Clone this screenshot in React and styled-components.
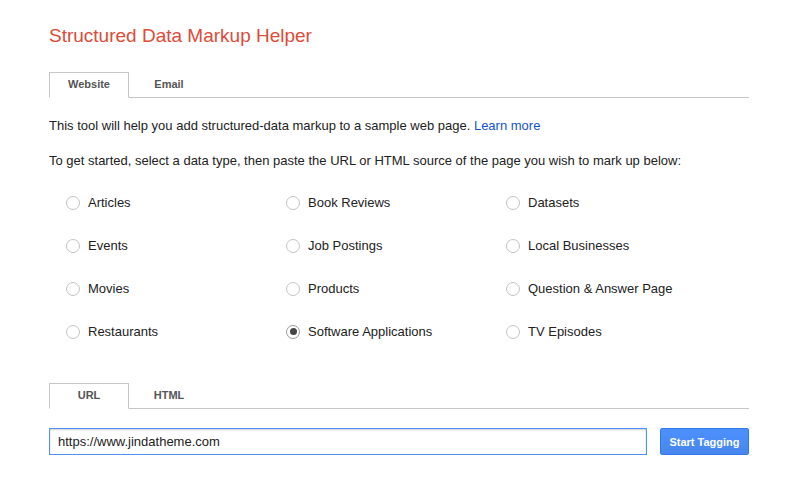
import React, { useState } from "react";
import styled, { createGlobalStyle } from "styled-components";

const Global = createGlobalStyle`
  html, body { margin: 0; padding: 0; background: #fff; }
  body { font-family: Arial, "Liberation Sans", Helvetica, sans-serif; color: #222; }
  * { box-sizing: border-box; }
`;

const Page = styled.div`
  width: 700px;
  margin-left: 49px;
  padding-top: 24px;
`;

const Title = styled.h1`
  margin: 0;
  font-size: 19px;
  font-weight: normal;
  color: #dd4b39;
  line-height: 24px;
  height: 24px;
`;

const Tabs = styled.div`
  display: flex;
  border-bottom: 1px solid #c6c6c6;
  margin-top: ${(p) => p.$top}px;
  height: 26px;
`;

const Tab = styled.div`
  width: 80px;
  height: 26px;
  display: flex;
  align-items: center;
  justify-content: center;
  padding-bottom: 3px;
  font-size: 11px;
  font-weight: bold;
  color: #555;
  border: 1px solid ${(p) => (p.$active ? "#c6c6c6" : "transparent")};
  border-bottom: ${(p) => (p.$active ? "1px solid #fff" : "none")};
  background: ${(p) => (p.$active ? "#fff" : "transparent")};
  cursor: default;
`;

const Para = styled.p`
  margin: ${(p) => p.$top}px 0 0 0;
  font-size: 13px;
  line-height: 16px;
  color: #222;
`;

const Link = styled.a`
  color: #1155cc;
  text-decoration: none;
`;

const Grid = styled.div`
  display: grid;
  grid-template-columns: repeat(3, 220px);
  grid-auto-rows: 43px;
  margin-top: 12px;
  margin-left: 17px;
`;

const Option = styled.label`
  display: flex;
  align-items: center;
  gap: 8px;
  font-size: 13px;
  color: #222;
  height: 43px;
  cursor: pointer;
`;

const Radio = styled.span`
  width: 14px;
  height: 14px;
  border-radius: 50%;
  border: 1px solid ${(p) => (p.$checked ? "#9a9a9a" : "#c4c4c4")};
  background: #fff;
  display: flex;
  align-items: center;
  justify-content: center;
  flex: none;
  &::after {
    content: "";
    width: 7px;
    height: 7px;
    border-radius: 50%;
    background: ${(p) => (p.$checked ? "#444" : "transparent")};
  }
`;

const InputRow = styled.div`
  display: flex;
  align-items: center;
  gap: 13px;
  margin-top: 19px;
`;

const UrlInput = styled.input`
  width: 598px;
  height: 27px;
  border: 1px solid #4d90fe;
  box-shadow: inset 0 1px 2px rgba(0, 0, 0, 0.2);
  padding: 0 8px;
  font-size: 13px;
  font-family: Arial, "Liberation Sans", sans-serif;
  color: #222;
  outline: none;
`;

const Button = styled.button`
  width: 89px;
  height: 27px;
  border: 1px solid #3079ed;
  border-radius: 2px;
  background: linear-gradient(#4d90fe, #4787ed);
  color: #fff;
  font-size: 11px;
  font-weight: bold;
  font-family: Arial, "Liberation Sans", sans-serif;
  padding: 0;
`;

const types = [
  "Articles", "Book Reviews", "Datasets",
  "Events", "Job Postings", "Local Businesses",
  "Movies", "Products", "Question & Answer Page",
  "Restaurants", "Software Applications", "TV Episodes",
];

export default function App() {
  const [sel, setSel] = useState("Software Applications");
  return (
    <>
      <Global />
      <Page>
        <Title>Structured Data Markup Helper</Title>
        <Tabs $top={24}>
          <Tab $active>Website</Tab>
          <Tab>Email</Tab>
        </Tabs>
        <Para $top={20}>
          This tool will help you add structured-data markup to a sample web page.{" "}
          <Link href="#">Learn more</Link>
        </Para>
        <Para $top={19}>
          To get started, select a data type, then paste the URL or HTML source of the page you wish to mark up below:
        </Para>
        <Grid>
          {types.map((t) => (
            <Option key={t} onClick={() => setSel(t)}>
              <Radio $checked={sel === t} />
              {t}
            </Option>
          ))}
        </Grid>
        <Tabs $top={30}>
          <Tab $active>URL</Tab>
          <Tab>HTML</Tab>
        </Tabs>
        <InputRow>
          <UrlInput defaultValue="https://www.jindatheme.com" />
          <Button>Start Tagging</Button>
        </InputRow>
      </Page>
    </>
  );
}
